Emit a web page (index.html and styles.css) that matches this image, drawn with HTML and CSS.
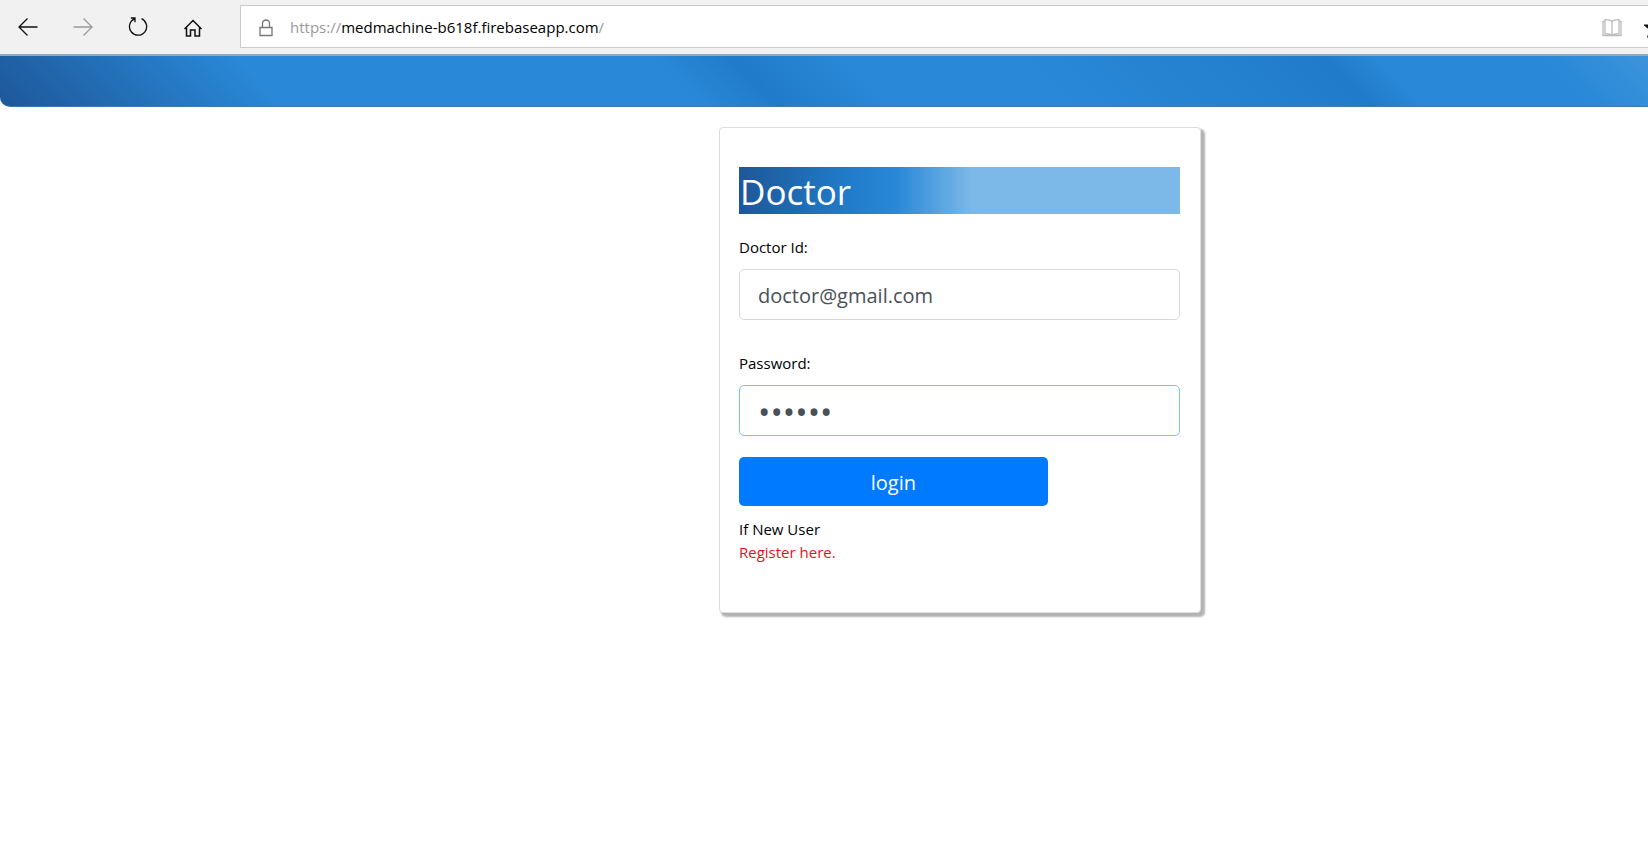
FILE: index.html
```
<!DOCTYPE html>
<html lang="en">
<head>
<meta charset="utf-8">
<title>Doctor login</title>
<link rel="stylesheet" href="styles.css">
</head>
<body>
<header class="toolbar">
  <nav class="nav">
    <button class="nav-button" type="button" aria-label="Back">
      <svg width="20" height="20" viewBox="0 0 20 20"><path d="M19.500 10H1M9.500 1.500L1 10l8.500 8.500"/></svg>
    </button>
    <button class="nav-button nav-button-off" type="button" aria-label="Forward">
      <svg width="20" height="20" viewBox="0 0 20 20"><path d="M.5 10H19M10.500 1.500L19 10l-8.500 8.500"/></svg>
    </button>
    <button class="nav-button" type="button" aria-label="Refresh">
      <svg width="20" height="20" viewBox="0 0 20 20"><path d="M13.500 1.700A8.600 8.600 0 1 1 6.400 1.800M2.800 1H7v4.300"/></svg>
    </button>
    <button class="nav-button" type="button" aria-label="Home">
      <svg width="20" height="20" viewBox="0 0 20 20"><path class="bold" d="M1.500 12L10 3.500l8.500 8.500M3.500 10.500v8.500h4v-6h4.500v6h4.500v-8.500"/></svg>
    </button>
  </nav>
  <div class="address">
    <svg class="lock" width="14" height="18" viewBox="0 0 14 18"><path d="M1 8.500h12v8H1zM3.500 8.500V4.500a3.500 3.500 0 0 1 7 0v4"/></svg>
    <div class="url"><span class="dim">https://</span>medmachine-b618f.firebaseapp.com<span class="dim">/</span></div>
    <button class="address-button" type="button" aria-label="Reading view">
      <svg class="book" width="20" height="18" viewBox="0 0 20 18"><path d="M10 2.500C8.500 1 6 .7 3 .7v14c3 0 5.500.3 7 1.800 1.500-1.500 4-1.800 7-1.800V.7c-3 0-5.500.3-7 1.800zM10 2.500v14M3 2.500H1v14h18v-14h-2"/></svg>
    </button>
    <button class="address-button" type="button" aria-label="Favourite">
      <svg class="star" width="20" height="20" viewBox="0 0 20 20"><path d="M10 1.500l2.300 6h6.200l-5 3.900 1.900 6.300L10 14l-5.400 3.700 1.900-6.300-5-3.900h6.200z"/></svg>
    </button>
  </div>
</header>
<div class="banner"></div>
<main class="page">
  <form class="card">
    <h1 class="title">Doctor</h1>
    <label class="label" for="doctor-id">Doctor Id:</label>
    <input class="field" id="doctor-id" type="email" value="doctor@gmail.com">
    <label class="label" for="password">Password:</label>
    <input class="field field-active" id="password" type="password" value="doctor">
    <button class="login" type="button">login</button>
    <p class="note">If New User</p>
    <a class="register" href="#register">Register here.</a>
  </form>
</main>
</body>
</html>
```

FILE: styles.css
```
* {
  box-sizing: border-box;
}

body {
  margin: 0;
  overflow-x: hidden;
  background: #fff;
  color: #000;
  font-family: "Open Sans", "Noto Sans", sans-serif;
  font-size: 15px;
  line-height: 23px;
}

button {
  padding: 0;
  border: 0;
  background: none;
  font-family: inherit;
}

svg {
  display: block;
  fill: none;
  stroke: #111;
  stroke-width: 1.3;
}

.toolbar {
  display: flex;
  align-items: center;
  height: 56px;
  padding-bottom: 1px;
  border-bottom: 2px solid #8eaac2;
  background: #f1f1f1;
  overflow: hidden;
}

.nav {
  display: flex;
  flex: none;
  width: 240px;
}

.nav-button {
  display: flex;
  align-items: center;
  justify-content: center;
  width: 55px;
  height: 40px;
}

.nav-button-off svg {
  stroke: #999;
}

.bold {
  stroke-width: 1.5;
}

.address {
  display: flex;
  flex: 1 0 auto;
  align-items: center;
  height: 43px;
  margin-right: -24px;
  padding: 2px 7px 0 18px;
  border: 1px solid #ccc;
  background: #fff;
}

.lock {
  stroke: #777;
}

.url {
  flex: 1;
  margin-left: 17px;
  font-size: 15px;
}

.dim {
  color: #999;
}

.address-button {
  margin-left: 22px;
}

.book {
  stroke: #bbb;
}

.star {
  stroke-width: 2;
}

.banner {
  height: 51px;
  border-bottom: 1px solid #3b78b4;
  border-bottom-left-radius: 10px;
  background: linear-gradient(45deg, #1e5799 0%, #2989d8 17%, #2989d8 41%, #207cca 46%, #2989d8 53%, #2989d8 62%, #207cca 81%, #2989d8 84%, #2989d8 94%, #3d94db 100%);
}

.page {
  padding: 20px 0 20px 719px;
}

.card {
  display: flex;
  flex-direction: column;
  max-width: 482px;
  padding: 39px 20px 48px 19px;
  border: 1px solid #ddd;
  border-radius: 4px;
  background: #fff;
  box-shadow: 3px 3px 2px 1px #b3b3b3;
}

.title {
  margin: 0 0 22px;
  padding: 3px 0 0 1px;
  background: linear-gradient(90deg, #1e5799 0%, #207cca 25%, #2989d8 36%, #7db9e8 53%);
  color: #fff;
  font-size: 35px;
  font-weight: 400;
  line-height: 44px;
}

.label {
  margin-bottom: 10px;
}

.field {
  width: 100%;
  height: 51px;
  margin-bottom: 32px;
  padding: 2px 18px 0;
  border: 1px solid #d5d9dd;
  border-radius: 5px;
  outline: none;
  background: #fff;
  color: #495057;
  font-family: inherit;
  font-size: 20px;
}

.field-active {
  margin-bottom: 21px;
  border-color: #80bdff;
  font-size: 33px;
}

.login {
  width: 70%;
  height: 49px;
  margin-bottom: 12px;
  padding-top: 2px;
  border-radius: 5px;
  background: #007bff;
  color: #fff;
  font-size: 20px;
}

.note {
  margin: 0;
}

.register {
  align-self: flex-start;
  color: #e3121b;
  text-decoration: none;
}
```
